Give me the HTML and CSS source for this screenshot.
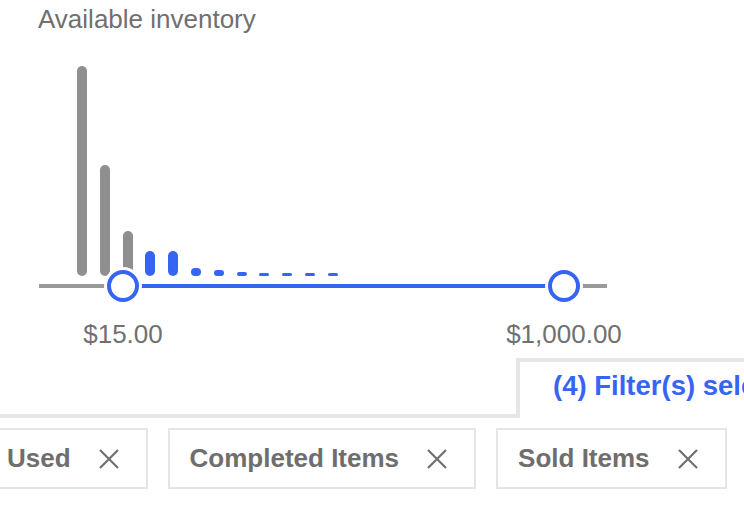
FILE: index.html
```html
<!DOCTYPE html>
<html lang="en">
<head>
    <meta charset="UTF-8">
    <meta name="viewport" content="width=device-width, initial-scale=1.0">
    <title>Price Filter</title>
    <link rel="stylesheet" href="styles.css">
</head>
<body>
    <div class="page">
        <h2 class="title">Available inventory</h2>

        <!-- histogram of listings per price bucket -->
        <div class="histogram">
            <span class="bar" style="height: 210px"></span>
            <span class="bar" style="height: 111px"></span>
            <span class="bar" style="height: 45px"></span>
            <span class="bar active" style="height: 25px"></span>
            <span class="bar active" style="height: 25px"></span>
            <span class="bar active" style="height: 8px"></span>
            <span class="bar active" style="height: 6px"></span>
            <span class="bar active" style="height: 4px"></span>
            <span class="bar active" style="height: 3px"></span>
            <span class="bar active" style="height: 3px"></span>
            <span class="bar active" style="height: 3px"></span>
            <span class="bar active" style="height: 3px"></span>
        </div>

        <div class="slider">
            <div class="slider-range"></div>
            <button class="knob knob-min" aria-label="Minimum price"></button>
            <button class="knob knob-max" aria-label="Maximum price"></button>
        </div>

        <div class="price-labels">
            <span class="price">$15.00</span>
            <span class="price">$1,000.00</span>
        </div>

        <div class="tab-row">
            <div class="tab-line"></div>
            <div class="tab">(4) Filter(s) selected</div>
        </div>

        <div class="chips">
            <div class="chip">
                <span>Used</span>
                <svg class="close" viewBox="0 0 20 20"><path d="M1 1L19 19M19 1L1 19"/></svg>
            </div>
            <div class="chip">
                <span>Completed Items</span>
                <svg class="close" viewBox="0 0 20 20"><path d="M1 1L19 19M19 1L1 19"/></svg>
            </div>
            <div class="chip">
                <span>Sold Items</span>
                <svg class="close" viewBox="0 0 20 20"><path d="M1 1L19 19M19 1L1 19"/></svg>
            </div>
        </div>
    </div>
</body>
</html>
```

FILE: styles.css
```css
body {
    font-family: "Liberation Sans", Arial, sans-serif;
    background: white;
    color: #707070;
    margin: 0;
    padding: 0;
    overflow: hidden;
}

.page {
    width: 744px;
    height: 506px;
    overflow: hidden;
}

.title {
    margin: 4px 0 0 38px;
    font-size: 26px;
    font-weight: normal;
    line-height: 30px;
    color: #707070;
}

.histogram {
    display: flex;
    align-items: flex-end;
    gap: 12.8px;
    height: 210px;
    margin: 32px 0 0 77px;
}

.bar {
    width: 10px;
    border-radius: 5px;
    background: #8f8f8f;
}

.bar.active {
    background: #3665f3;
}

.slider {
    position: relative;
    width: 568px;
    height: 4px;
    margin: 7.5px 0 0 39px;
    background: #9a9a9a;
}

.slider-range {
    position: absolute;
    left: 84px;
    top: 0;
    width: 441px;
    height: 4px;
    background: #3665f3;
}

.knob {
    position: absolute;
    top: -14px;
    width: 32px;
    height: 32px;
    padding: 0;
    box-sizing: border-box;
    border: 4px solid #3665f3;
    border-radius: 50%;
    background: white;
    box-shadow: 0 0 0 3px white;
}

.knob-min {
    left: 68px;
}

.knob-max {
    left: 509px;
}

.price-labels {
    display: flex;
    gap: 321px;
    margin-top: 31.5px;
    padding-left: 63px;
}

.price {
    width: 120px;
    text-align: center;
    font-size: 26px;
    line-height: 30px;
}

.tab-row {
    display: flex;
    align-items: flex-end;
    margin-top: 9px;
}

.tab-line {
    width: 516px;
    flex-shrink: 0;
    border-bottom: 4px solid #e5e5e5;
}

.tab {
    flex: 1;
    height: 60px;
    box-sizing: border-box;
    padding: 9px 0 0 33px;
    border-top: 4px solid #e5e5e5;
    border-left: 4px solid #e5e5e5;
    font-size: 27.5px;
    font-weight: bold;
    line-height: 30px;
    color: #3665f3;
    white-space: nowrap;
}

.chips {
    display: flex;
    gap: 20px;
    margin: 10px 0 0 -15px;
}

.chip {
    display: flex;
    align-items: center;
    gap: 28px;
    height: 61px;
    box-sizing: border-box;
    padding: 0 27px 0 20px;
    border: 2px solid #e5e5e5;
    font-size: 26px;
    font-weight: bold;
    color: #6e6e6e;
    white-space: nowrap;
}

.close {
    width: 20px;
    height: 20px;
    flex-shrink: 0;
    fill: none;
    stroke: #707070;
    stroke-width: 2.2;
}
```
